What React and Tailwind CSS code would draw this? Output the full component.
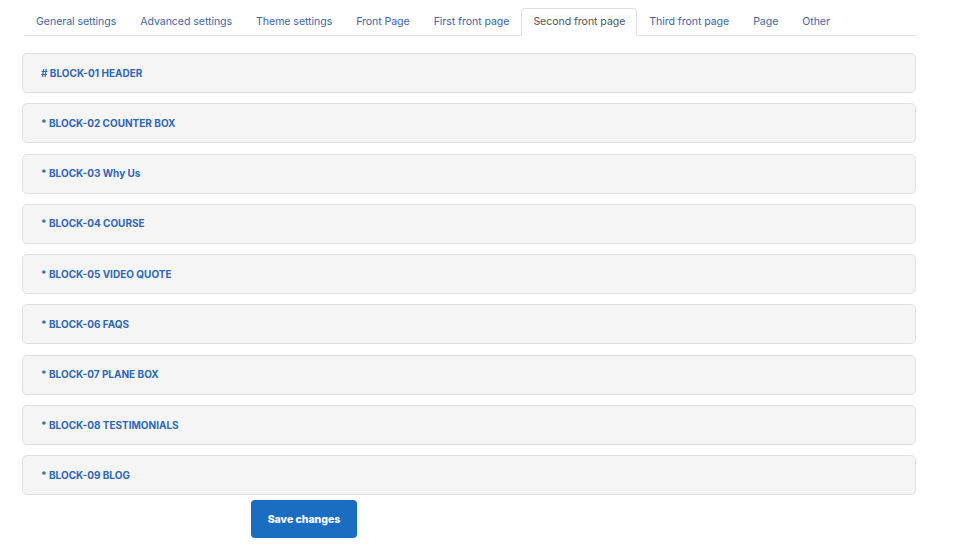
import React from "react";

const tabs = [
  "General settings",
  "Advanced settings",
  "Theme settings",
  "Front Page",
  "First front page",
  "Second front page",
  "Third front page",
  "Page",
  "Other",
];

const blocks = [
  "# BLOCK-01 HEADER",
  "* BLOCK-02 COUNTER BOX",
  "* BLOCK-03 Why Us",
  "* BLOCK-04 COURSE",
  "* BLOCK-05 VIDEO QUOTE",
  "* BLOCK-06 FAQS",
  "* BLOCK-07 PLANE BOX",
  "* BLOCK-08 TESTIMONIALS",
  "* BLOCK-09 BLOG",
];

export default function App() {
  return (
    <div
      className="w-[971px] h-[557px] bg-white overflow-hidden"
      style={{ fontFamily: "Inter, 'Noto Sans', sans-serif" }}
    >
      <div className="pl-[22px] pt-[8px] w-[916px]">
        <ul className="ml-[2px] flex border-b border-[#dee2e6] h-[28px]">
          {tabs.map((t) => {
            const active = t === "Second front page";
            return (
              <li
                key={t}
                className={
                  active
                    ? "px-[11px] h-[28px] -mb-px flex items-center border border-[#dee2e6] border-b-white bg-white rounded-t-[4px] text-[10.6px] text-[#555] tracking-[-0.07px]"
                    : "px-[11px] h-[28px] flex items-center border border-transparent text-[10.6px] text-[#4264a8] tracking-[-0.07px]"
                }
              >
                {t}
              </li>
            );
          })}
        </ul>
        <div className="mt-[17px] flex flex-col gap-[10.3px]">
          {blocks.map((b) => (
            <div
              key={b}
              className="h-[40px] flex items-center pl-[18px] bg-[#f5f5f5] border border-[#e1e1e1] rounded-[5px] text-[10px] font-bold text-[#2f67b1]"
            >
              {b}
            </div>
          ))}
        </div>
        <div className="mt-[5px] pl-[229px]">
          <button className="w-[106px] h-[38px] rounded-[4px] bg-[#1a6dc0] text-white text-[10.5px] font-extrabold">
            Save changes
          </button>
        </div>
      </div>
    </div>
  );
}
